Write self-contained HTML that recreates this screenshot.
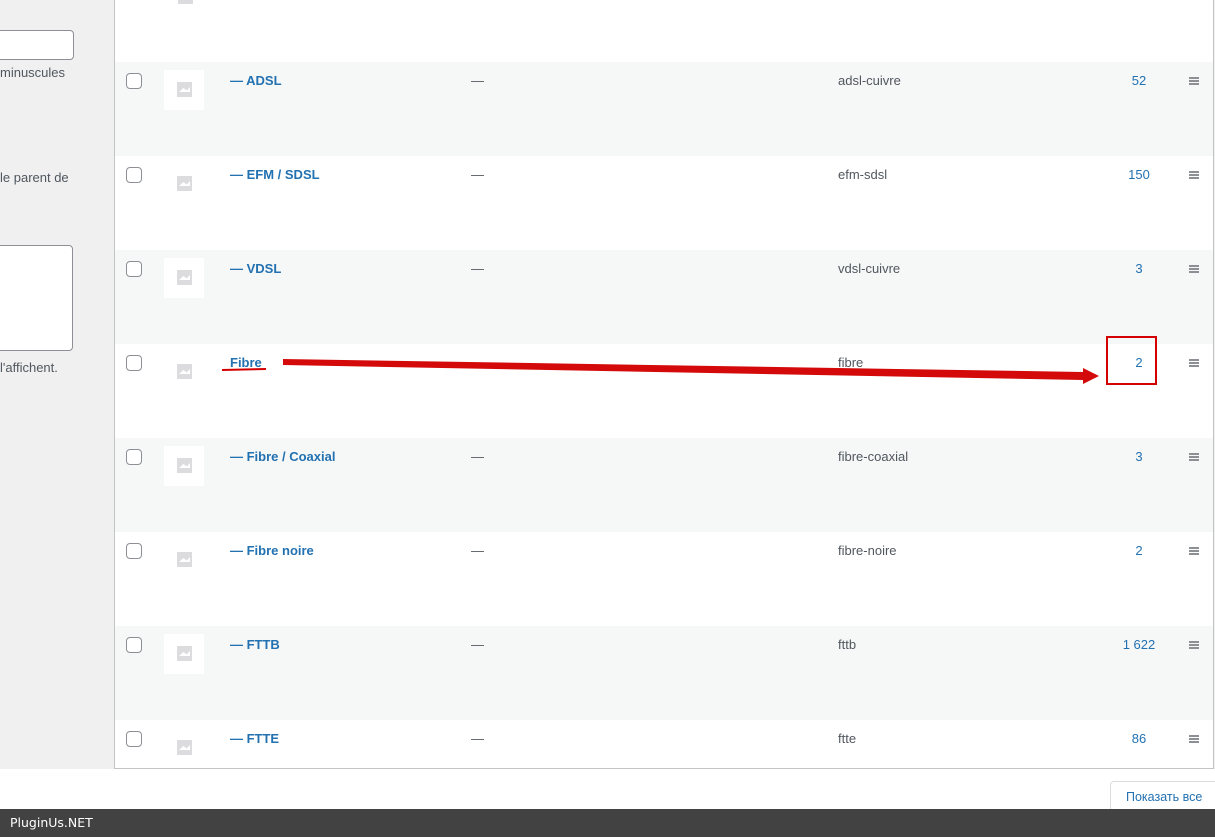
<!DOCTYPE html>
<html><head><meta charset="utf-8"><style>
*{margin:0;padding:0;box-sizing:border-box}
body{width:1215px;height:837px;overflow:hidden;background:#f0f0f1;font-family:"Liberation Sans",sans-serif;font-size:13px;color:#50575e;position:relative}
.abs{position:absolute}
#tbl{position:absolute;left:114px;top:0;width:1100px;height:769px;background:#fff;border-left:1px solid #c3c4c7;border-right:1px solid #c3c4c7;border-bottom:1px solid #c3c4c7}
.row{position:absolute;left:0;width:1098px;height:94px}
.g{background:#f6f7f7}
.cb{position:absolute;left:11px;top:11px;width:16px;height:16px;border:1px solid #8c8f94;border-radius:4px;background:#fff}
.th{position:absolute;left:49px;top:8px;width:40px;height:40px}
.g .th{background:#fff}
.ic{position:absolute;left:13px;top:12px;width:15px;height:15px;background:#dcdcde}
.ic:after{content:"";position:absolute;left:2px;top:5px;width:11px;height:5px;background:#fff;clip-path:polygon(0 100%,40% 20%,70% 70%,100% 0,100% 100%)}
.nm{position:absolute;left:115px;top:11px;color:#2271b1;font-weight:bold}
.ds{position:absolute;left:356px;top:11px}
.sl{position:absolute;left:723px;top:11px}
.ct{position:absolute;left:984px;width:80px;text-align:center;top:11px;color:#2271b1}
.hb{position:absolute;left:1074px;top:15px;width:10px;height:2px;background:#8c8f94;box-shadow:0 3px 0 #8c8f94,0 6px 0 #8c8f94}
</style></head><body>
<div class="abs" style="left:-5px;top:30px;width:79px;height:30px;background:#fff;border:1px solid #8c8f94;border-radius:4px"></div>
<div class="abs" style="left:0;top:65px">minuscules</div>
<div class="abs" style="left:0;top:170px">le parent de</div>
<div class="abs" style="left:-5px;top:245px;width:78px;height:106px;background:#fff;border:1px solid #8c8f94;border-radius:4px"></div>
<div class="abs" style="left:0;top:360px">l'affichent.</div>
<div id="tbl">
<div class="abs" style="left:63px;top:-8px;width:15px;height:12px;background:#dcdcde"></div>
<div class="row g" style="top:62px"><div class="cb"></div><div class="th"><div class="ic"></div></div><div class="nm">— ADSL</div><div class="ds">—</div><div class="sl">adsl-cuivre</div><div class="ct">52</div><div class="hb"></div></div>
<div class="row" style="top:156px"><div class="cb"></div><div class="th"><div class="ic"></div></div><div class="nm">— EFM / SDSL</div><div class="ds">—</div><div class="sl">efm-sdsl</div><div class="ct">150</div><div class="hb"></div></div>
<div class="row g" style="top:250px"><div class="cb"></div><div class="th"><div class="ic"></div></div><div class="nm">— VDSL</div><div class="ds">—</div><div class="sl">vdsl-cuivre</div><div class="ct">3</div><div class="hb"></div></div>
<div class="row" style="top:344px"><div class="cb"></div><div class="th"><div class="ic"></div></div><div class="nm">Fibre</div><div class="sl">fibre</div><div class="ct">2</div><div class="hb"></div></div>
<div class="row g" style="top:438px"><div class="cb"></div><div class="th"><div class="ic"></div></div><div class="nm">— Fibre / Coaxial</div><div class="ds">—</div><div class="sl">fibre-coaxial</div><div class="ct">3</div><div class="hb"></div></div>
<div class="row" style="top:532px"><div class="cb"></div><div class="th"><div class="ic"></div></div><div class="nm">— Fibre noire</div><div class="ds">—</div><div class="sl">fibre-noire</div><div class="ct">2</div><div class="hb"></div></div>
<div class="row g" style="top:626px"><div class="cb"></div><div class="th"><div class="ic"></div></div><div class="nm">— FTTB</div><div class="ds">—</div><div class="sl">fttb</div><div class="ct">1 622</div><div class="hb"></div></div>
<div class="row" style="top:720px;height:48px"><div class="cb"></div><div class="th"><div class="ic"></div></div><div class="nm">— FTTE</div><div class="ds">—</div><div class="sl">ftte</div><div class="ct">86</div><div class="hb"></div></div>
</div>
<div class="abs" style="left:0;top:769px;width:1215px;height:40px;background:#fff"></div>
<div class="abs" style="left:1110px;top:781px;width:110px;height:34px;border:1px solid #dcdcde;border-radius:4px;background:#fff;color:#2271b1;padding:8px 0 0 15px;font-size:12.5px">Показать все</div>
<div class="abs" style="left:0;top:809px;width:1215px;height:28px;background:#424242;color:#fff;font-family:'DejaVu Sans',sans-serif;font-size:12.5px;padding:6px 0 0 10px">PluginUs.NET</div>
<svg class="abs" style="left:0;top:0" width="1215" height="837">
<line x1="222" y1="370" x2="266" y2="369" stroke="#d40000" stroke-width="2"/>
<polygon points="283,359 1083,372 1083,368 1099,376 1083,384 1083,380 283,365" fill="#d40a0a"/>
<rect x="1107" y="337" width="49" height="47" fill="none" stroke="#d40000" stroke-width="2"/>
</svg>
</body></html>
